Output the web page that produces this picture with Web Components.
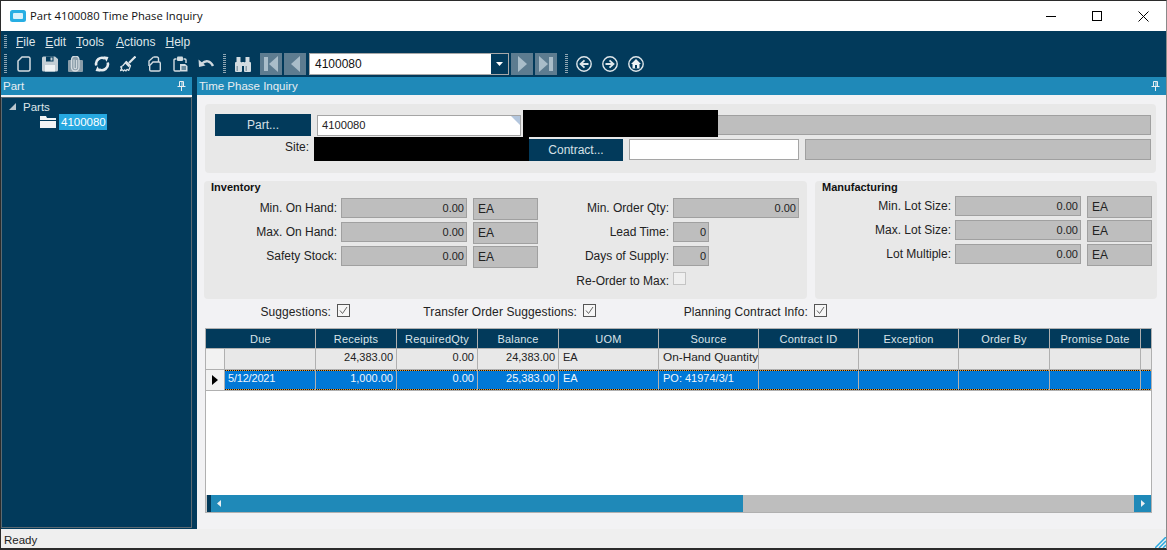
<!DOCTYPE html>
<html>
<head>
<meta charset="utf-8">
<title>Part 4100080 Time Phase Inquiry</title>
<style>
  html, body { margin: 0; padding: 0; overflow: hidden; background: #fff; }
  body { font: 12px "Liberation Sans", Arial, sans-serif; color: #111; }
</style>
</head>
<body>
<erp-window>
  <erp-titlebar caption="Part 4100080 Time Phase Inquiry"></erp-titlebar>
  <erp-menubar></erp-menubar>
  <erp-toolbar></erp-toolbar>
  <erp-workspace>
    <erp-panel slot="left" caption="Part"><erp-tree></erp-tree></erp-panel>
    <erp-panel slot="right" caption="Time Phase Inquiry"><erp-inquiry></erp-inquiry></erp-panel>
  </erp-workspace>
  <erp-statusbar>Ready</erp-statusbar>
</erp-window>

<script>
const NAVY = "#023a5b";
const BLUE = "#1f89b8";

// base class, every element just renders its static template once
class ErpElement extends HTMLElement {
  connectedCallback() {
    if (this.shadowRoot) return;
    this.attachShadow({ mode: "open" });
    const tmp = document.createElement("template");
    tmp.innerHTML = this.template();
    this.shadowRoot.appendChild(tmp.content.cloneNode(true));
  }
  attr(name, fallback = "") {
    return this.hasAttribute(name) ? this.getAttribute(name) : fallback;
  }
}

class ErpWindow extends ErpElement {
  template() {
    return `
    <style>
      :host {
        display: flex; flex-direction: column; box-sizing: border-box;
        width: 1167px; height: 550px; overflow: hidden;
        border: 1px solid #2b2b2b; border-bottom-width: 2px; border-right-color: #8a8a8a;
        background: ${NAVY};
      }
    </style>
    <slot></slot>`;
  }
}

class ErpTitlebar extends ErpElement {
  template() {
    return `
    <style>
      :host {
        display: flex; align-items: center; flex: none; height: 30px; background: #fff;
        font: 11.25px "Open Sans", "Liberation Sans", sans-serif; color: #111;
      }
      .logo { margin: 0 4px 0 9px; flex: none; }
      .cap { flex: 1; white-space: nowrap; padding-bottom: 2px; }
      .btn { width: 46px; height: 30px; display: flex; align-items: center; justify-content: center; flex: none; }
    </style>
    <svg class="logo" width="16" height="12" viewBox="0 0 16 12">
      <rect width="16" height="12" rx="2.500" fill="#27aee3"/>
      <rect x="3" y="3" width="10" height="6" rx="1" fill="#d8f1fb"/>
    </svg>
    <span class="cap">${this.attr("caption")}</span>
    <div class="btn"><svg width="10" height="10"><path d="M0 5.500h10" stroke="#000"/></svg></div>
    <div class="btn"><svg width="10" height="10"><rect x=".5" y=".5" width="9" height="9" fill="none" stroke="#000"/></svg></div>
    <div class="btn"><svg width="11" height="11"><path d="M.5.5l10 10M10.500.5l-10 10" stroke="#000" fill="none"/></svg></div>`;
  }
}

const GRIP = `width:3px;height:20px;flex:none;background:repeating-linear-gradient(180deg,#8fa6b3 0 1px,transparent 1px 2px);`;

class ErpMenubar extends ErpElement {
  template() {
    const items = ["File", "Edit", "Tools", "Actions", "Help"]
      .map((m) => `<span><u>${m[0]}</u>${m.slice(1)}</span>`).join("");
    return `
    <style>
      :host {
        display: flex; align-items: center; flex: none; height: 21px; gap: 10px;
        padding-left: 3px; background: ${NAVY}; color: #dfe6ea;
        font: 12px "Liberation Sans", sans-serif;
      }
      .grip { ${GRIP} height: 14px; margin-right: -1px; }
      span:nth-of-type(3) { margin-right: 2px; }
      u { text-decoration-thickness: 1px; text-underline-offset: 1px; }
    </style>
    <div class="grip"></div>${items}`;
  }
}

const ICONS = {
  doc: `<path d="M6 1h6.500A1.500 1.500 0 0 1 14 2.500v11a1.500 1.500 0 0 1-1.500 1.500h-9A1.500 1.500 0 0 1 2 13.500V5z" fill="none" stroke="#d3dce1" stroke-width="1.500"/>`,
  save: `<path d="M0 2A1.500 1.500 0 0 1 1.500.5H13L16 3v11A1.500 1.500 0 0 1 14.500 15.500h-13A1.500 1.500 0 0 1 0 14z" fill="#c3ced5"/><rect x="4" y=".5" width="7.500" height="5" fill="${NAVY}"/><rect x="8.500" y="1.500" width="2" height="3" fill="#c3ced5"/><rect x="3" y="9" width="10" height="6.500" fill="#eef2f4"/>`,
  clip: `<rect x="0" y="4" width="15" height="12" rx="1" fill="#8a9da9"/><rect x="3.500" y="0" width="7.500" height="15" rx="3.700" fill="#8a9da9" stroke="#d4dce1" stroke-width="1.300"/><path d="M6 3.500v8a1.300 1.300 0 0 0 2.600 0V4" fill="none" stroke="#d4dce1" stroke-width="1.100"/>`,
  sync: `<path d="M2.300 9.500A6 6 0 0 1 11 2.600" fill="none" stroke="#e6ecef" stroke-width="2.600"/><path d="M9.500.3l5 .6-2 4.800z" fill="#e6ecef"/><path d="M13.700 6.500A6 6 0 0 1 5 13.400" fill="none" stroke="#e6ecef" stroke-width="2.600"/><path d="M6.500 15.700l-5-.6 2-4.800z" fill="#e6ecef"/>`,
  broom: `<path d="M15.500.5L9 7" stroke="#dfe6ea" stroke-width="2.200" fill="none"/><path d="M6.300 5.500l4.200 4.200-1.800 4.800-1.700-1.200-1 1.700-1.200-1.200-1.500 1.200-.8-1.300-2 1 1.300-3L.5 11l2.500-1.500z" fill="${NAVY}" stroke="#dfe6ea" stroke-width="1.200" stroke-linejoin="round"/><path d="M5.500 6.500l4 4" stroke="#dfe6ea" stroke-width="2.200"/>`,
  copy: `<path d="M7.500 1H11a1.500 1.500 0 0 1 1.500 1.500V6" fill="none" stroke="#d3dce1" stroke-width="1.400"/><path d="M7.500 1L3 5v5" fill="none" stroke="#d3dce1" stroke-width="1.400"/><path d="M7 6h6a1.300 1.300 0 0 1 1.300 1.300v6.400A1.300 1.300 0 0 1 13 15H5a1.300 1.300 0 0 1-1.300-1.300V9.500z" fill="${NAVY}" stroke="#d3dce1" stroke-width="1.400"/>`,
  paste: `<path d="M4.500 3H3a1 1 0 0 0-1 1v10a1 1 0 0 0 1 1h5M11.500 3H13a1 1 0 0 1 1 1v3" fill="none" stroke="#d3dce1" stroke-width="1.400"/><rect x="5" y=".5" width="6" height="4.500" rx="1" fill="#d3dce1"/><path d="M8 8h5l2.500 2v5.500H8z" fill="#d3dce1"/><path d="M9.500 11h4.500M9.500 13h4.500" stroke="${NAVY}"/>`,
  undo: `<path d="M4 7.500c3.500-3.500 8.500-3 11 2.500" fill="none" stroke="#cfd8de" stroke-width="2.400"/><path d="M.5 3.500L1 11l6.500-1.500z" fill="#cfd8de"/>`,
  bino: `<rect x="0" y="6" width="7" height="10" rx="1" fill="#d3dce1"/><rect x="9" y="6" width="7" height="10" rx="1" fill="#d3dce1"/><rect x="1.500" y="1" width="4" height="5.500" fill="#d3dce1"/><rect x="10.500" y="1" width="4" height="5.500" fill="#d3dce1"/><rect x="7" y="6" width="2" height="4" fill="#d3dce1"/><rect x="1.500" y="10" width="1.500" height="5" fill="#8a9da9"/><rect x="10.500" y="10" width="1.500" height="5" fill="#8a9da9"/>`,
  back: `<circle cx="8" cy="8" r="7.200" fill="none" stroke="#dfe6ea" stroke-width="1.400"/><path d="M12.500 8H5M8.500 4.300L4.500 8l4 3.700" fill="none" stroke="#dfe6ea" stroke-width="1.800"/>`,
  fwd: `<circle cx="8" cy="8" r="7.200" fill="none" stroke="#dfe6ea" stroke-width="1.400"/><path d="M3.500 8H11M7.500 4.300L11.500 8l-4 3.700" fill="none" stroke="#dfe6ea" stroke-width="1.800"/>`,
  home: `<circle cx="8" cy="8" r="7.200" fill="none" stroke="#dfe6ea" stroke-width="1.400"/><path d="M8 3L3 8h1.500v4.500h7V8H13z" fill="#eef2f4"/><rect x="7" y="9" width="2" height="3.500" fill="${NAVY}"/>`,
};
const icon = (name) => `<svg class="ico" width="16" height="16" viewBox="0 0 16 16">${ICONS[name]}</svg>`;

class ErpToolbar extends ErpElement {
  template() {
    const nav = (d) => `<div class="nav"><svg width="22" height="22" viewBox="0 0 22 22"><path d="${d}" fill="#a9bdc9"/></svg></div>`;
    return `
    <style>
      :host {
        display: flex; align-items: center; flex: none; height: 25px; box-sizing: border-box;
        padding: 0 0 2px 3px; background: ${NAVY}; font: 12px "Liberation Sans", sans-serif;
      }
      .grip { ${GRIP} }
      .ico { flex: none; display: block; }
      .set { display: flex; gap: 10px; }
      .nav { width: 22px; height: 22px; background: #5d7c90; flex: none; }
      .combo {
        width: 200px; height: 22px; box-sizing: border-box; flex: none; margin: 0 2px 0 3px;
        display: flex; border: 1px solid #a8a8a8; background: #fff; color: #111;
      }
      .combo span { flex: 1; line-height: 21px; padding-left: 5px; }
      .combo i { width: 17px; background: ${NAVY}; display: flex; align-items: center; justify-content: center; }
    </style>
    <div class="grip"></div>
    <div class="set" style="margin-left:9px">
      ${["doc", "save", "clip", "sync", "broom", "copy", "paste", "undo"].map(icon).join("")}
    </div>
    <div class="grip" style="margin-left:9px"></div>
    <div style="margin-left:9px;height:16px">${icon("bino")}</div>
    <div style="margin-left:9px;display:flex;gap:2px">
      ${nav("M4 4h4v14H4zM18 3v16L9 11z")}
      ${nav("M16 3v16L7 11z")}
    </div>
    <div class="combo"><span>4100080</span><i><svg width="7" height="4"><path d="M0 0h7L3.500 4z" fill="#fff"/></svg></i></div>
    <div style="display:flex;gap:2px">
      ${nav("M7 3v16l9-8z")}
      ${nav("M4 3v16l9-8zM14 4h4v14h-4z")}
    </div>
    <div class="grip" style="margin-left:8px"></div>
    <div class="set" style="margin-left:8px">
      ${["back", "fwd", "home"].map(icon).join("")}
    </div>`;
  }
}

class ErpWorkspace extends ErpElement {
  template() {
    return `
    <style>
      :host { display: flex; flex: 1; min-height: 0; gap: 5px; background: ${NAVY}; }
      ::slotted([slot=left]) { width: 191px; flex: none; }
      ::slotted([slot=right]) { flex: 1; min-width: 0; }
    </style>
    <slot name="left"></slot><slot name="right"></slot>`;
  }
}

class ErpPanel extends ErpElement {
  template() {
    return `
    <style>
      :host { display: flex; flex-direction: column; min-height: 0; }
      header {
        display: flex; align-items: center; justify-content: space-between; flex: none;
        height: 18px; padding: 0 6px 0 2px; background: ${BLUE}; color: #e8eef2;
        font: 11.5px "Liberation Sans", sans-serif;
      }
      svg { display: block; }
      .body { flex: 1; min-height: 0; display: flex; flex-direction: column; }
    </style>
    <header><span>${this.attr("caption")}</span>
      <svg width="9" height="10" viewBox="0 0 9 10"><path d="M2.500.5h4v5h-4zM.5 5.500h8M4.500 5.500V10M5 1v4" fill="none" stroke="#e8eef2"/></svg>
    </header>
    <div class="body"><slot></slot></div>`;
  }
}

class ErpTree extends ErpElement {
  template() {
    return `
    <style>
      :host {
        display: block; flex: 1; margin-top: 2px; box-sizing: border-box;
        background: ${NAVY}; border: 1px solid #5c6a72;
        margin-bottom: 1px; padding: 0 0 0 7px; color: #dfe6ea;
        font: 12px "Liberation Sans", sans-serif; background-clip: padding-box;
        box-shadow: 0 -2px 0 #f2f2f4;
      }
      .row { display: flex; align-items: center; height: 16px; }
      .row svg { flex: none; }
      .row b { font-weight: normal; padding-top: 1px; font-size: 11.5px; }
      .leaf { margin-left: 31px; }
      .sel { background: #27a8e0; color: #fff; padding: 0 2px; height: 16px; line-height: 16px; margin-left: 3px; width: 44px; font-size: 11.5px; }
    </style>
    <div class="row">
      <svg width="7" height="7" style="margin-right:7px"><path d="M7 0v7H0z" fill="#b9c6ce"/></svg><b>Parts</b>
    </div>
    <div class="row leaf">
      <svg width="16" height="12" viewBox="0 0 16 12"><path d="M0 0h6l1 2h9v2H0zM0 5h16v7H0z" fill="#f2f4f5"/></svg>
      <span class="sel">4100080</span>
    </div>`;
  }
}

// boxed value, grey when read only and white when editable
class ErpBox extends ErpElement {
  template() {
    return `
    <style>
      :host {
        display: block; box-sizing: border-box; flex: none; height: 20px; padding: 0 2px;
        background: #bebebe; border: 1px solid #a0a0a0; color: #222;
        font: 11px/18px "Liberation Sans", sans-serif; white-space: nowrap; overflow: hidden;
      }
      :host([unit]) { height: 22px; padding: 2px 4px 0; font-size: 12px; line-height: 17px; }
      :host([right]) { text-align: right; }
      :host([edit]) { background: #fff; height: 21px; line-height: 19px; padding-left: 4px; border-color: #a5a5a5; font-size: 11.2px; position: relative; }
      .corner { display: none; position: absolute; top: 0; right: 0; width: 0; height: 0; border-style: solid; border-width: 0 9px 9px 0; border-color: transparent #b3c6dd transparent transparent; }
      :host([corner]) .corner { display: block; }
    </style>
    <slot></slot><i class="corner"></i>`;
  }
}

class ErpButton extends ErpElement {
  template() {
    return `
    <style>
      :host {
        display: block; box-sizing: border-box; flex: none; height: 22px; text-align: center;
        background: ${NAVY}; color: #d6e0e6; font: 12px/23px "Liberation Sans", sans-serif;
      }
    </style>
    <slot></slot>`;
  }
}

// black bar over the censored parts of the form
class ErpRedact extends ErpElement {
  template() {
    return `<style>:host { display: block; position: absolute; background: #000; }</style>`;
  }
}

class ErpField extends ErpElement {
  template() {
    const unit = this.attr("unit");
    return `
    <style>
      :host { display: flex; gap: 4px; height: 24px; color: #222; font: 12px "Liberation Sans", sans-serif; }
      .lab { width: var(--lab); text-align: right; line-height: 21px; flex: none; white-space: nowrap; }
      .val { width: var(--val); }
      .unit { width: 65px; margin-left: 2px; }
    </style>
    <span class="lab">${this.attr("label")}</span>
    <erp-box class="val" right>${this.attr("value")}</erp-box>
    ${unit ? `<erp-box class="unit" unit>${unit}</erp-box>` : ""}`;
  }
}

class ErpCheck extends ErpElement {
  template() {
    const on = this.hasAttribute("checked");
    return `
    <style>
      :host { display: flex; justify-content: flex-end; gap: 6px; height: 14px; flex: none;
        color: #222; font: 12px/17px "Liberation Sans", sans-serif; white-space: nowrap; }
      :host([off]) { gap: 4px; line-height: 19px; }
      :host([checked]) span { letter-spacing: .1px; }
      .box { width: 13px; height: 13px; box-sizing: border-box; border: 1px solid #555; background: #f6f6f6; flex: none; }
      :host([off]) .box { border-color: #c4c4c4; background: #efefef; }
      svg { display: block; }
    </style>
    <span>${this.attr("label")}</span>
    <div class="box">${on ? `<svg width="11" height="11"><path d="M2 5.500L4.500 8.500 9 2" fill="none" stroke="#666"/></svg>` : ""}</div>`;
  }
}

class ErpGroup extends ErpElement {
  template() {
    return `
    <style>
      :host {
        display: block; box-sizing: border-box; height: 118px; background: #e8e8e8; border-radius: 4px;
        padding: 0 5px 0 7px; font: 12px "Liberation Sans", sans-serif;
      }
      h4 { margin: 0; font: bold 11px/13px "Liberation Sans", sans-serif; color: #111; height: var(--head); }
      .cols { display: flex; }
    </style>
    <h4>${this.attr("caption")}</h4>
    <div class="cols"><slot></slot></div>`;
  }
}

const COLS = "19px 91px 81px 81px 81px 100px 100px 100px 100px 91px 91px 10px";

class ErpGrid extends ErpElement {
  template() {
    const head = ["Due", "Receipts", "RequiredQty", "Balance", "UOM", "Source", "Contract ID", "Exception", "Order By", "Promise Date", ""];
    const aligns = ["l due", "r", "r", "r", "l", "l", "l", "l", "l", "l", "l"];
    const rows = [
      { sel: false, cells: ["", "24,383.00", "0.00", "24,383.00", "EA", "On-Hand Quantity", "", "", "", "", ""] },
      { sel: true, cells: ["5/12/2021", "1,000.00", "0.00", "25,383.00", "EA", "PO: 41974/3/1", "", "", "", "", ""] },
    ];
    const headHtml = head.map((h, i) =>
      `<div class="th" ${i === 0 ? 'style="grid-column:span 2"' : ""}>${h}</div>`).join("");
    const rowHtml = rows.map((r) => `
      <div class="row ${r.sel ? "sel" : ""}">
        <div class="rh">${r.sel ? '<svg width="6" height="10"><path d="M0 0l6 5-6 5z" fill="#000"/></svg>' : ""}</div>
        ${r.cells.map((c, i) => `<div class="td ${aligns[i]}">${c}</div>`).join("")}
      </div>`).join("");
    return `
    <style>
      :host {
        display: flex; flex-direction: column; box-sizing: border-box; height: 185px; width: 947px;
        border: 1px solid #b0b0b0; background: #fff; font: 11px "Liberation Sans", sans-serif; color: #222;
      }
      .head, .row { display: grid; grid-template-columns: ${COLS}; flex: none; }
      .th {
        height: 19px; line-height: 20px; text-align: center; background: ${NAVY}; color: #dbe4e9;
        border-right: 1px solid #b0b0b0; border-bottom: 1px solid #b0b0b0; letter-spacing: .2px;
      }
      .th:last-child { border-right: 0; }
      .rh, .td { box-sizing: border-box; height: 21px; border-right: 1px solid #b0b0b0; border-bottom: 1px solid #b0b0b0;
        background: #e8e8e8; line-height: 16px; overflow: hidden; white-space: nowrap; }
      .rh { background: #f2f2f2; display: flex; align-items: center; justify-content: center; }
      .td { padding: 0 3px 0 4px; font-size: 11px; }
      .td:last-child { border-right: 0; }
      .r { text-align: right; }
      .due { padding-left: 3px; letter-spacing: -.2px; }
      .row:not(.sel) .td:nth-child(7) { font-size: 11.8px; padding-right: 0; }
      .sel .td {
        background-color: #0078d7; color: #f0f6fb;
        background-image: repeating-linear-gradient(90deg, #111 0 1px, #f59a23 1px 2px), repeating-linear-gradient(90deg, #111 0 1px, #f59a23 1px 2px);
        background-size: 100% 1px; background-position: 0 0, 0 19px; background-repeat: no-repeat;
      }
      .blank { flex: 1; }
      .sb { display: flex; height: 17px; flex: none; background: #bebebe; }
      .sb .gut { width: 1px; background: #c8c8c8; }
      .sb .edge { width: 4px; background: ${NAVY}; }
      .sb .thumb { width: 532px; background: ${BLUE}; display: flex; align-items: center; padding-left: 6px; box-sizing: border-box; }
      .sb .fill { flex: 1; }
      .sb .end { width: 17px; background: ${BLUE}; display: flex; align-items: center; justify-content: center; }
      svg { display: block; }
    </style>
    <div class="head">${headHtml}</div>
    ${rowHtml}
    <div class="blank"></div>
    <div class="sb">
      <div class="gut"></div><div class="edge"></div>
      <div class="thumb"><svg width="4" height="7"><path d="M4 0v7L0 3.500z" fill="#e8eef2"/></svg></div>
      <div class="fill"></div>
      <div class="end"><svg width="4" height="7"><path d="M0 0v7l4-3.500z" fill="#e8eef2"/></svg></div>
    </div>`;
  }
}

class ErpInquiry extends ErpElement {
  template() {
    return `
    <style>
      :host {
        display: block; flex: 1; box-sizing: border-box; background: #f2f2f4;
        padding: 9px 10px 0 7px; font: 12px "Liberation Sans", sans-serif; color: #222;
      }
      .top {
        position: relative; height: 69px; margin-left: 1px; box-sizing: border-box; padding: 10px 5px 0 10px;
        background: #e8e8e8; border-radius: 4px;
      }
      .line { display: flex; align-items: flex-start; }
      .line.one { height: 23px; }
      .site { width: 94px; text-align: right; line-height: 21px; flex: none; }
      .groups { display: flex; gap: 8px; margin-top: 8px; }
      .groups .inv { width: 603px; --head: 17px; flex: none; }
      .groups .mfg { flex: 1; --head: 15px; }
      .col { display: block; }
      .checks { display: flex; margin: 5px 0 10px; height: 14px; }
      erp-grid { margin-left: 1px; }
    </style>
    <div class="top">
      <div class="line one">
        <erp-button style="width:96px">Part...</erp-button>
        <erp-box edit corner style="width:204px;margin:1px 2px 0 6px">4100080</erp-box>
        <erp-box style="flex:1;margin-top:1px"></erp-box>
      </div>
      <div class="line">
        <span class="site">Site:</span>
        <div style="width:220px;flex:none"></div>
        <erp-button style="width:94px;margin-top:2px">Contract...</erp-button>
        <erp-box edit style="width:170px;margin:2px 6px 0">&nbsp;</erp-box>
        <erp-box style="flex:1;margin-top:2px;height:21px"></erp-box>
      </div>
      <erp-redact style="left:318px;top:6px;width:195px;height:27px"></erp-redact>
      <erp-redact style="left:109px;top:33px;width:215px;height:24px"></erp-redact>
    </div>
    <div class="groups">
      <erp-group class="inv" caption="Inventory">
        <div class="col" style="--lab:126px;--val:126px">
          <erp-field label="Min. On Hand:" value="0.00" unit="EA"></erp-field>
          <erp-field label="Max. On Hand:" value="0.00" unit="EA"></erp-field>
          <erp-field label="Safety Stock:" value="0.00" unit="EA"></erp-field>
        </div>
        <div class="col" style="--lab:100px;margin-left:31px">
          <erp-field label="Min. Order Qty:" value="0.00" style="--val:126px"></erp-field>
          <erp-field label="Lead Time:" value="0" style="--val:36px"></erp-field>
          <erp-field label="Days of Supply:" value="0" style="--val:36px"></erp-field>
          <erp-check off label="Re-Order to Max:" style="width:117px;margin-top:2px"></erp-check>
        </div>
      </erp-group>
      <erp-group class="mfg" caption="Manufacturing">
        <div class="col" style="--lab:129px;--val:126px">
          <erp-field label="Min. Lot Size:" value="0.00" unit="EA"></erp-field>
          <erp-field label="Max. Lot Size:" value="0.00" unit="EA"></erp-field>
          <erp-field label="Lot Multiple:" value="0.00" unit="EA"></erp-field>
        </div>
      </erp-group>
    </div>
    <div class="checks">
      <erp-check checked label="Suggestions:" style="width:146px"></erp-check>
      <erp-check checked label="Transfer Order Suggestions:" style="width:246px"></erp-check>
      <erp-check checked label="Planning Contract Info:" style="width:231px"></erp-check>
    </div>
    <erp-grid></erp-grid>`;
  }
}

class ErpStatusbar extends ErpElement {
  template() {
    return `
    <style>
      :host {
        display: flex; align-items: center; justify-content: space-between; flex: none; height: 19px;
        background: #efefef; color: #222; padding-left: 3px; font: 11.5px "Liberation Sans", sans-serif;
      }
      span { padding-top: 3px; }
      svg { display: block; align-self: flex-end; }
    </style>
    <span><slot></slot></span>
    <svg width="11" height="11" viewBox="0 0 11 11"><path d="M0 11L11 0M4 11l7-7M8 11l3-3" stroke="#27a8e0" stroke-width="1.500"/></svg>`;
  }
}

customElements.define("erp-window", ErpWindow);
customElements.define("erp-titlebar", ErpTitlebar);
customElements.define("erp-menubar", ErpMenubar);
customElements.define("erp-toolbar", ErpToolbar);
customElements.define("erp-workspace", ErpWorkspace);
customElements.define("erp-panel", ErpPanel);
customElements.define("erp-tree", ErpTree);
customElements.define("erp-box", ErpBox);
customElements.define("erp-button", ErpButton);
customElements.define("erp-redact", ErpRedact);
customElements.define("erp-field", ErpField);
customElements.define("erp-check", ErpCheck);
customElements.define("erp-group", ErpGroup);
customElements.define("erp-grid", ErpGrid);
customElements.define("erp-inquiry", ErpInquiry);
customElements.define("erp-statusbar", ErpStatusbar);
</script>
</body>
</html>
